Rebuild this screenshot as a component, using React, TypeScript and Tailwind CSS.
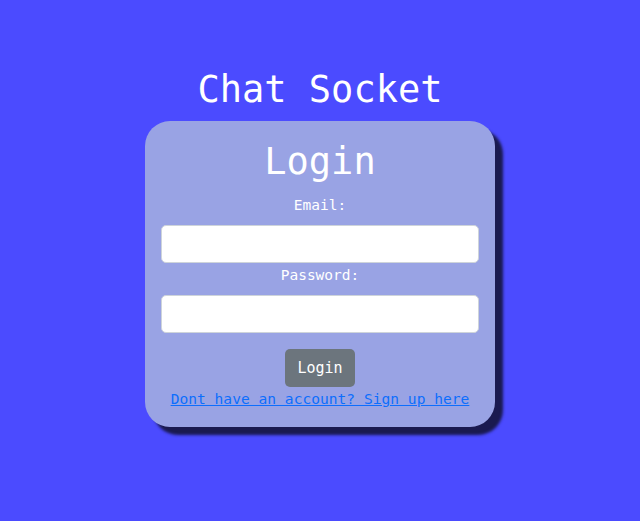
export default function App() {
  return (
    <div className="min-h-screen w-full bg-[#4b4bff] flex flex-col items-center font-['DejaVu_Sans_Mono',monospace] text-white">
      <h1 className="mt-[67px] text-[37px] leading-[46px]">Chat Socket</h1>
      <div className="mt-[8px] w-[350px] rounded-[25px] bg-[#99a3e4] px-4 pt-[18px] pb-[18px] flex flex-col items-center shadow-[8px_8px_3px_#1a1a50]">
        <h2 className="text-[37px] leading-[46px]">Login</h2>
        <label className="mt-[11px] text-[14.5px] leading-[18px]">Email:</label>
        <input className="mt-[11px] w-full h-[38px] rounded-[5px] border border-[#ced4da] bg-white" />
        <label className="mt-[3px] text-[14.5px] leading-[18px]">Password:</label>
        <input type="password" className="mt-[11px] w-full h-[38px] rounded-[5px] border border-[#ced4da] bg-white" />
        <button className="mt-[16px] h-[38px] w-[70px] rounded-[5px] bg-[#6c757d] text-[15px] text-white">Login</button>
        <a href="#" className="mt-[2px] text-[14.6px] leading-[20px] text-[#0d6efd] underline">Dont have an account? Sign up here</a>
      </div>
    </div>
  );
}
